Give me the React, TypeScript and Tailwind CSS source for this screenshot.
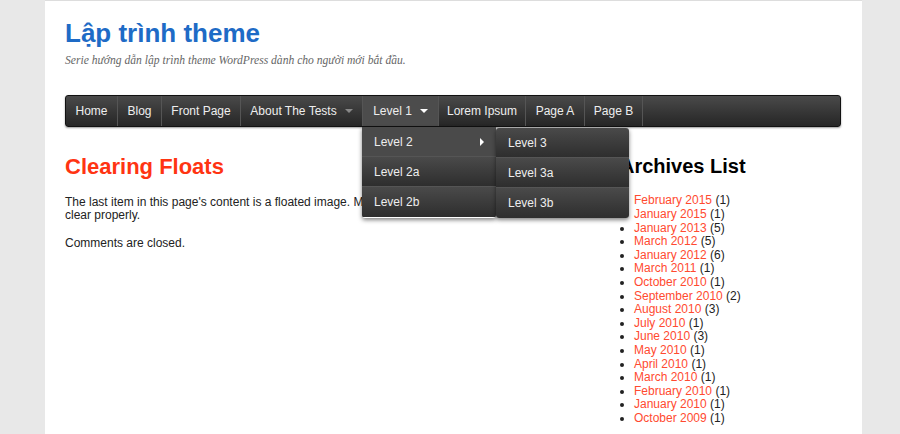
import React from "react";

const nav = [
  { t: "Home", w: 52 },
  { t: "Blog", w: 44 },
  { t: "Front Page", w: 79 },
  { t: "About The Tests", w: 122, arrow: "gray" },
  { t: "Level 1", w: 76, arrow: "white", active: true },
  { t: "Lorem Ipsum", w: 87 },
  { t: "Page A", w: 59 },
  { t: "Page B", w: 58 },
];

const archives: [string, number][] = [
  ["February 2015", 1], ["January 2015", 1], ["January 2013", 5], ["March 2012", 5],
  ["January 2012", 6], ["March 2011", 1], ["October 2010", 1], ["September 2010", 2],
  ["August 2010", 3], ["July 2010", 1], ["June 2010", 3], ["May 2010", 1],
  ["April 2010", 1], ["March 2010", 1], ["February 2010", 1], ["January 2010", 1],
  ["October 2009", 1],
];

const dd = "h-[30px] flex items-center px-[12px] text-[12px] text-[#eee] border-b border-[#555] bg-gradient-to-b from-[#4a4a4a] to-[#2e2e2e]";

export default function App() {
  return (
    <div className="w-[900px] h-[434px] overflow-hidden bg-[#e8e8e8] flex" style={{ fontFamily: '"Liberation Sans", Arial, sans-serif' }}>
      <div className="w-[817px] ml-[45px] bg-white border-t border-[#ddd] px-[20px] h-full">
        <div className="pt-[16px]">
          <h1 className="text-[26px] font-bold text-[#1e6bc6] leading-[32px]">Lập trình theme</h1>
          <p className="text-[11.6px] italic text-[#666] mt-[3px]" style={{ fontFamily: '"Liberation Serif", serif' }}>
            Serie hướng dẫn lập trình theme WordPress dành cho người mới bắt đầu.
          </p>
        </div>
        <div className="relative mt-[26px] h-[32px] w-[776px] rounded-[3px] bg-gradient-to-b from-[#4a4a4a] to-[#262626] border border-[#111] flex shadow-[0_1px_2px_rgba(0,0,0,0.4)]">
          {nav.map((n) => (
            <div key={n.t} className={`relative h-full flex items-center justify-center gap-[8px] border-r border-[#555] text-[12px] text-[#eee] ${n.active ? "bg-[#4c4c4c]" : ""}`} style={{ width: n.w }}>
              {n.t}
              {n.arrow && (
                <span className={`w-0 h-0 border-l-[4px] border-r-[4px] border-t-[4px] border-l-transparent border-r-transparent ${n.arrow === "white" ? "border-t-white" : "border-t-[#888]"}`} />
              )}
              {n.active && (
                <div className="absolute left-[-1px] top-[31px] flex z-10">
                  <div className="w-[134px] shadow-[0_2px_4px_rgba(0,0,0,0.5)] rounded-b-[3px] overflow-hidden">
                    <div className={dd + " justify-between bg-none bg-[#4a4a4a]"}>
                      Level 2
                      <span className="w-0 h-0 border-t-[4px] border-b-[4px] border-l-[4px] border-t-transparent border-b-transparent border-l-white" />
                    </div>
                    <div className={dd}>Level 2a</div>
                    <div className={dd + " border-b-0"}>Level 2b</div>
                  </div>
                  <div className="w-[133px] mt-[1px] shadow-[0_2px_4px_rgba(0,0,0,0.5)] rounded-[3px] overflow-hidden">
                    <div className={dd}>Level 3</div>
                    <div className={dd}>Level 3a</div>
                    <div className={dd + " border-b-0"}>Level 3b</div>
                  </div>
                </div>
              )}
            </div>
          ))}
        </div>
        <div className="flex mt-[26px]">
          <div className="w-[555px] text-[12px] text-[#222]">
            <h2 className="text-[22px] font-bold text-[#ff3412] leading-[28px]">Clearing Floats</h2>
            <p className="mt-[15px] leading-[13px] w-[470px]">
              The last item in this page's content is a floated image. Make sure any elements after it clear properly.
            </p>
            <p className="mt-[12px]">Comments are closed.</p>
          </div>
          <div className="text-[12px] text-[#222]">
            <h3 className="text-[20px] font-bold text-black leading-[26px]">Archives List</h3>
            <ul className="list-disc ml-[14px] mt-[15px] leading-[13.6px]">
              {archives.map(([m, c]) => (
                <li key={m}><span className="text-[#ff4a30]">{m}</span> ({c})</li>
              ))}
            </ul>
          </div>
        </div>
      </div>
    </div>
  );
}
